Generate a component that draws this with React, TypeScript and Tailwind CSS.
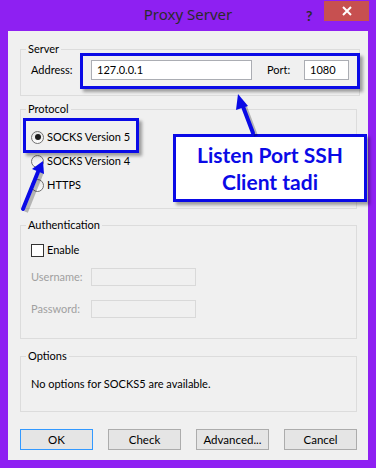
import React from 'react';

const font = { fontFamily: 'Lato, "Noto Sans", sans-serif' };

const Radio = ({ checked, label }: { checked?: boolean; label: string }) => (
  <div className="flex items-center h-[16px]">
    <span className="w-[13px] h-[13px] rounded-full border border-[#707070] bg-gradient-to-b from-[#e6e6e6] to-[#fdfdfd] flex items-center justify-center">
      {checked && <span className="w-[6px] h-[6px] rounded-full bg-[#1a1a1a]" />}
    </span>
    <span className="ml-[3px]">{label}</span>
  </div>
);

const Btn = ({ label, primary }: { label: string; primary?: boolean }) => (
  <button
    className={`w-[73px] h-[21px] text-[11.5px] leading-none bg-[#e5e5e5] border ${
      primary ? 'border-[#3399ff]' : 'border-[#acacac]'
    }`}
  >
    {label}
  </button>
);

const Group = ({ title, className, children }: { title: string; className?: string; children: React.ReactNode }) => (
  <fieldset className={`border border-[#dcdcdc] mx-[12px] mr-[11px] px-[10px] ${className ?? ''}`}>
    <legend className="ml-[-5px] px-[2px] leading-[16px]">{title}</legend>
    {children}
  </fieldset>
);

export default function App() {
  return (
    <div className="relative w-[376px] h-[468px] bg-[#8e20f2] overflow-hidden text-[11px] text-black" style={font}>
      {/* title bar */}
      <div className="relative h-[31px] flex items-center justify-center">
        <span className="text-[15px] text-[#2b2b2b] mt-[-2px]" style={{ fontFamily: '"Noto Sans", sans-serif' }}>
          Proxy Server
        </span>
        <span className="absolute left-[306px] top-[5px] text-[14px] font-bold text-[#2a2a2a]">?</span>
        <div className="absolute left-[324px] top-[1px] w-[45px] h-[20px] bg-[#c75050] flex items-center justify-center">
          <svg width="10" height="10" viewBox="0 0 10 10">
            <path d="M1 1L9 9M9 1L1 9" stroke="#fff" strokeWidth="2" />
          </svg>
        </div>
      </div>

      {/* client area */}
      <div className="mx-[8px] h-[429px] bg-[#f0f0f0] pt-[10px]">
        <Group title="Server" className="pt-[3px] pb-[15px]">
          <div className="flex items-center">
            <span className="w-[60px]">Address:</span>
            <div className="w-[161px] h-[20px] bg-white border border-[#abadb3] flex items-center px-[5px]">127.0.0.1</div>
            <span className="ml-[15px] w-[37px]">Port:</span>
            <div className="w-[45px] h-[20px] bg-white border border-[#abadb3] flex items-center px-[5px]">1080</div>
          </div>
        </Group>

        <Group title="Protocol" className="mt-[5px] pt-[12px] pb-[15px]">
          <div className="flex flex-col gap-[8px]">
            <Radio checked label="SOCKS Version 5" />
            <Radio label="SOCKS Version 4" />
            <Radio label="HTTPS" />
          </div>
        </Group>

        <Group title="Authentication" className="mt-[8px] pt-[9px] pb-[20px]">
          <div className="flex items-center h-[16px]">
            <span className="w-[13px] h-[13px] border border-[#333] bg-white" />
            <span className="ml-[3px]">Enable</span>
          </div>
          <div className="flex items-center mt-[10px] text-[#a0a0a0]">
            <span className="w-[60px]">Username:</span>
            <div className="w-[105px] h-[18px] border border-[#d9d9d9]" />
          </div>
          <div className="flex items-center mt-[14px] text-[#a0a0a0]">
            <span className="w-[60px]">Password:</span>
            <div className="w-[105px] h-[18px] border border-[#d9d9d9]" />
          </div>
        </Group>

        <Group title="Options" className="mt-[9px] pt-[12px] pb-[19px]">
          <div className="leading-[16px]">No options for SOCKS5 are available.</div>
        </Group>

        <div className="mt-[17px] ml-[12px] mr-[11px] flex justify-between">
          <Btn label="OK" primary />
          <Btn label="Check" />
          <Btn label="Advanced..." />
          <Btn label="Cancel" />
        </div>
      </div>

      {/* annotations */}
      <div className="absolute left-[80px] top-[53px] w-[280px] h-[36px] border-[3px] border-[#0a0ae6] shadow-[3px_3px_3px_rgba(0,0,0,0.35)]" />
      <div className="absolute left-[23px] top-[118px] w-[116px] h-[35px] border-[3px] border-[#0a0ae6] shadow-[3px_3px_3px_rgba(0,0,0,0.35)]" />
      <div
        className="absolute left-[173px] top-[134px] w-[194px] h-[68px] bg-white border-[3px] border-[#0a0ae6] shadow-[3px_3px_3px_rgba(0,0,0,0.35)] flex flex-col items-center justify-center text-[#0a0ae6] font-bold text-[21px] leading-[27px]"
        style={{ fontFamily: 'Lato, "Open Sans", sans-serif' }}
      >
        <span>Listen Port SSH</span>
        <span>Client tadi</span>
      </div>
      <svg className="absolute left-0 top-0" width="376" height="468" viewBox="0 0 376 468">
        <g stroke="rgba(0,0,0,0.25)" strokeWidth="4" fill="rgba(0,0,0,0.25)">
          <line x1="256" y1="136" x2="244" y2="104" />
          <line x1="26" y1="212" x2="42" y2="172" />
        </g>
        <g stroke="#0a0ae6" strokeWidth="4" fill="#0a0ae6" strokeLinecap="round">
          <line x1="253" y1="133" x2="242" y2="104" />
          <polygon points="238,94 248,106 236,110" stroke="none" />
          <line x1="23" y1="209" x2="38" y2="172" />
          <polygon points="43,161 44,174 32,169" stroke="none" />
        </g>
      </svg>
    </div>
  );
}
